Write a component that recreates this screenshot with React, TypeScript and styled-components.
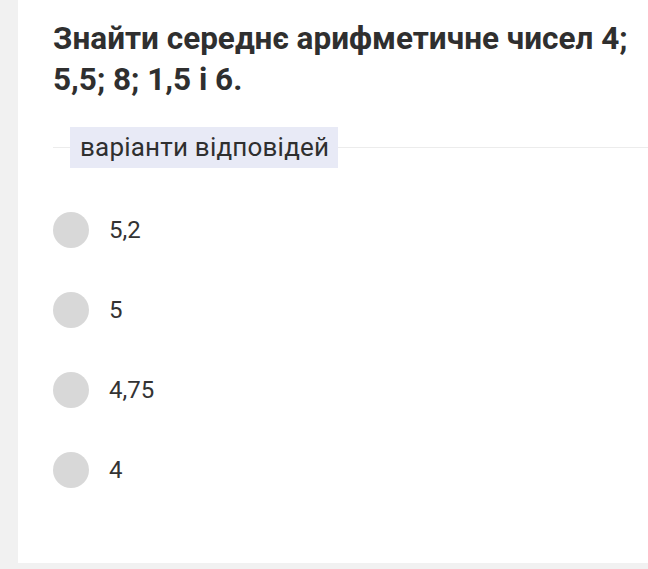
import React from "react";
import styled, { createGlobalStyle } from "styled-components";

const Global = createGlobalStyle`
  html, body { margin: 0; padding: 0; background: #f1f1f1; }
  body { font-family: Roboto, "Noto Sans", sans-serif; }
`;

const Page = styled.div`
  width: 648px;
  height: 569px;
  display: flex;
  overflow: hidden;
`;

const Card = styled.div`
  margin-left: 18px;
  width: 630px;
  height: 563px;
  background: #ffffff;
  box-sizing: border-box;
  padding: 18px 0 0 35px;
  display: flex;
  flex-direction: column;
`;

const Title = styled.h1`
  margin: 0;
  font-size: 31.5px;
  line-height: 41px;
  font-weight: 700;
  color: #2f2f2f;
  padding-right: 0;
`;

const Divider = styled.div`
  margin-top: 27px;
  display: flex;
  align-items: center;
  &::before {
    content: "";
    width: 17px;
    height: 1px;
    background: #ececec;
  }
  &::after {
    content: "";
    flex: 1;
    height: 1px;
    background: #ececec;
  }
`;

const Label = styled.span`
  background: #e8eaf6;
  color: #2f2f2f;
  font-size: 26px;
  line-height: 41px;
  letter-spacing: 0.2px;
  padding: 0 9px 0 10px;
`;

const Options = styled.div`
  margin-top: 44px;
  display: flex;
  flex-direction: column;
  gap: 44px;
`;

const Option = styled.label`
  display: flex;
  align-items: center;
  gap: 20px;
  height: 36px;
`;

const Radio = styled.span`
  width: 36px;
  height: 36px;
  border-radius: 50%;
  background: #d8d8d8;
  flex: none;
`;

const OptionText = styled.span`
  font-size: 24px;
  color: #333333;
`;

const options = ["5,2", "5", "4,75", "4"];

export default function App() {
  return (
    <Page>
      <Global />
      <Card>
        <Title>
          Знайти середнє арифметичне чисел 4; 5,5; 8; 1,5 і 6.
        </Title>
        <Divider>
          <Label>варіанти відповідей</Label>
        </Divider>
        <Options>
          {options.map((o) => (
            <Option key={o}>
              <Radio />
              <OptionText>{o}</OptionText>
            </Option>
          ))}
        </Options>
      </Card>
    </Page>
  );
}
